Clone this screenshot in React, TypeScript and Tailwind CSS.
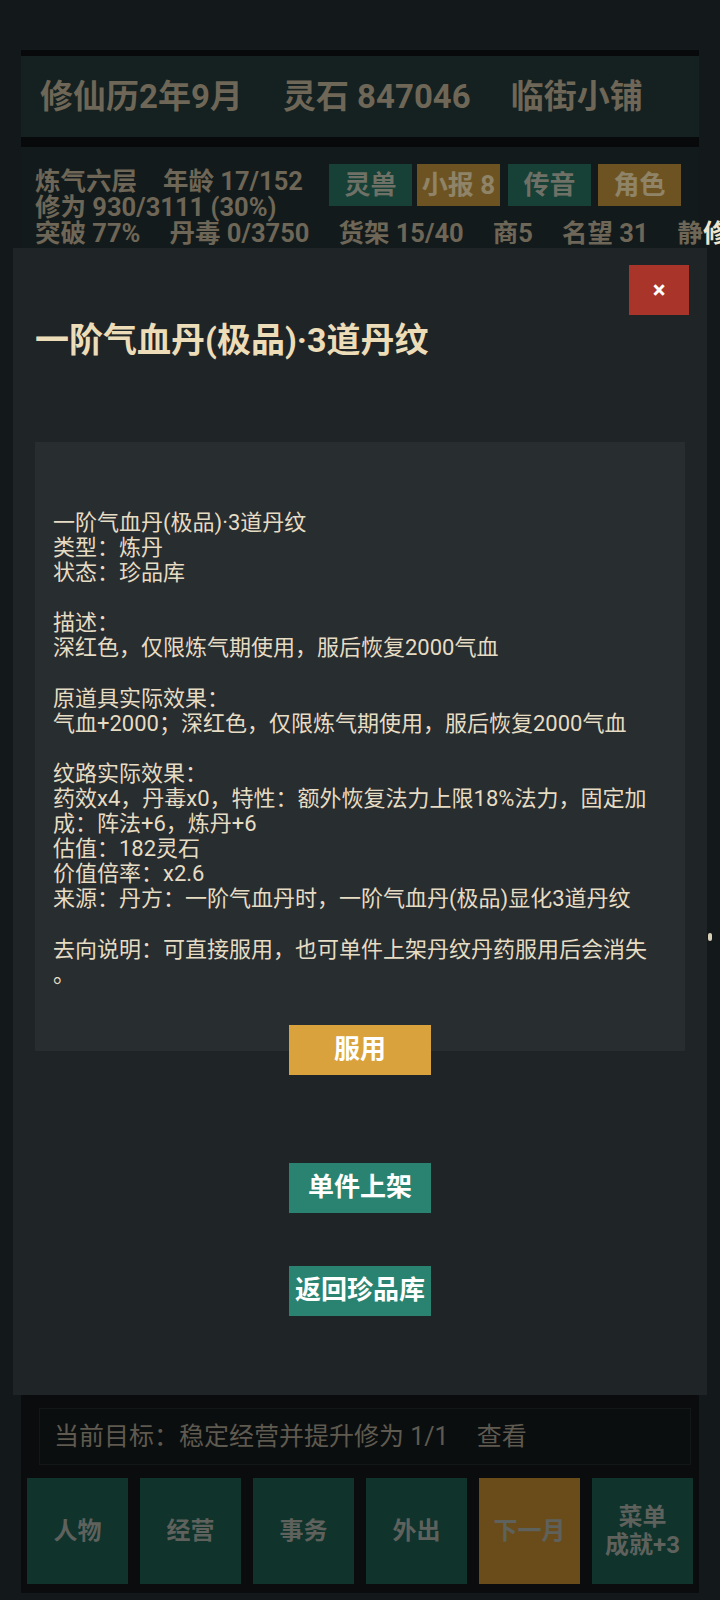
import React from 'react';

const FONT = "font-['Roboto','Noto_Sans_CJK_SC',sans-serif]";

const badges = [
    { label: '灵兽', tone: 'teal', ml: 'ml-0' },
    { label: '小报 8', tone: 'brown', ml: 'ml-[5px]' },
    { label: '传音', tone: 'teal', ml: 'ml-[8px]' },
    { label: '角色', tone: 'brown', ml: 'ml-[7px]' },
];

const navItems = [
    { label: ['人物'], brown: false },
    { label: ['经营'], brown: false },
    { label: ['事务'], brown: false },
    { label: ['外出'], brown: false },
    { label: ['下一月'], brown: true },
    { label: ['菜单', '成就+3'], brown: false },
];

const detailLines = [
    '一阶气血丹(极品)·3道丹纹',
    '类型：炼丹',
    '状态：珍品库',
    '',
    '描述：',
    '深红色，仅限炼气期使用，服后恢复2000气血',
    '',
    '原道具实际效果：',
    '气血+2000；深红色，仅限炼气期使用，服后恢复2000气血',
    '',
    '纹路实际效果：',
    '药效x4，丹毒x0，特性：额外恢复法力上限18%法力，固定加',
    '成：阵法+6，炼丹+6',
    '估值：182灵石',
    '价值倍率：x2.6',
    '来源：丹方：一阶气血丹时，一阶气血丹(极品)显化3道丹纹',
    '',
    '去向说明：可直接服用，也可单件上架丹纹丹药服用后会消失',
    '。',
];

const Header = () => (
    <div className="flex flex-col gap-[10px] bg-[#08090a] pt-[6px]">
        {/* top status */}
        <div className="flex h-[81px] items-center gap-[40px] bg-[#152020] pl-[19px] text-[33px] font-bold text-[#6e6656] whitespace-nowrap">
            <span>修仙历2年9月</span>
            <span>灵石 847046</span>
            <span>临街小铺</span>
        </div>

        {/* cultivation stats */}
        <div className="bg-[#131a1b] pl-[14px] pt-[17px] pb-[20px] text-[25.5px] font-bold leading-[26px] text-[#6e6656]">
            <div className="flex items-start">
                <div className="w-[294px] shrink-0 pt-[4px] whitespace-nowrap">
                    <div className="flex gap-[26px]">
                        <span>炼气六层</span>
                        <span>年龄 17/152</span>
                    </div>
                    <div>修为 930/3111 (30%)</div>
                </div>
                <div className="flex">
                    {badges.map((b) => (
                        <div
                            key={b.label}
                            className={`${b.ml} flex h-[42px] w-[83px] items-center justify-center text-[26px] font-bold ${b.tone === 'teal' ? 'bg-[#174036] text-[#6f7166]' : 'bg-[#6e5322] text-[#8f8468]'}`}
                        >
                            {b.label}
                        </div>
                    ))}
                </div>
            </div>
            <div className="flex gap-[29px] whitespace-nowrap">
                <span>突破 77%</span>
                <span>丹毒 0/3750</span>
                <span>货架 15/40</span>
                <span>商5</span>
                <span>名望 31</span>
                <span>
                    静<span className="text-[#efe4cc]">修</span>
                </span>
            </div>
        </div>
    </div>
);

const BottomBar = () => (
    <div className="flex h-[198px] flex-col bg-[#0a0c0d] pt-[13px]">
        <div className="ml-[18px] mr-[8px] flex h-[57px] items-center border border-[#131717] bg-[#0b0e0f] pl-[14px] text-[25px] text-[#5f5a50] whitespace-nowrap">
            <span>当前目标：稳定经营并提升修为 1/1</span>
            <span className="ml-[28px]">查看</span>
        </div>
        <div className="mt-[13px] flex gap-[12px] px-[6px]">
            {navItems.map((n) => (
                <div
                    key={n.label.join()}
                    className={`flex h-[106px] w-[101px] flex-col items-center justify-center text-[24px] font-bold leading-[28px] text-[#5e615c] ${n.brown ? 'bg-[#6a4c1b]' : 'bg-[#10332c]'}`}
                >
                    {n.label.map((l) => (
                        <span key={l}>{l}</span>
                    ))}
                </div>
            ))}
        </div>
    </div>
);

const ItemModal = () => (
    <div className="absolute left-[13px] top-[248px] flex h-[1147px] w-[694px] flex-col bg-[#1f2526] px-[22px] pt-[17px]">
        <div className="flex justify-end">
            <button className="mr-[-4px] flex h-[50px] w-[60px] items-center justify-center bg-[#a8342a] text-[24px] font-bold text-white">
                ×
            </button>
        </div>
        <h2 className="mt-[5px] text-[34px] font-bold leading-[40px] text-[#ecdcb8]">一阶气血丹(极品)·3道丹纹</h2>

        {/* item detail */}
        <div className="mt-[82px] bg-[#282d2f] pl-[18px] pt-[68px] pb-[64px] text-[22px] leading-[25.1px] text-[#e6dcc4]">
            {detailLines.map((line, i) => (
                <div key={i} className="h-[25.1px] whitespace-nowrap">
                    {line}
                </div>
            ))}
        </div>

        <div className="flex flex-col items-center">
            <button className="relative mt-[-26px] flex h-[50px] w-[142px] items-center justify-center bg-[#d9a23c] text-[26px] font-bold text-white">
                服用
            </button>
            <button className="mt-[88px] flex h-[50px] w-[142px] items-center justify-center bg-[#2a8370] text-[26px] font-bold text-white">
                单件上架
            </button>
            <button className="mt-[53px] flex h-[50px] w-[142px] items-center justify-center bg-[#2a8370] text-[26px] font-bold text-white">
                返回珍品库
            </button>
        </div>
    </div>
);

export default function App() {
    return (
        <div className={`relative min-h-[1600px] w-[720px] overflow-hidden bg-[#13181b] ${FONT}`}>
            <div className="flex min-h-[1600px] flex-col px-[21px] pt-[50px] pb-[7px]">
                <Header />
                <div className="flex-1" />
                <BottomBar />
            </div>

            <ItemModal />

            {/* stray glyph peeking past the modal edge */}
            <div className="absolute left-[708px] top-[933px] h-[8px] w-[4px] rounded-sm bg-[#d8cfb8]" />
        </div>
    );
}
